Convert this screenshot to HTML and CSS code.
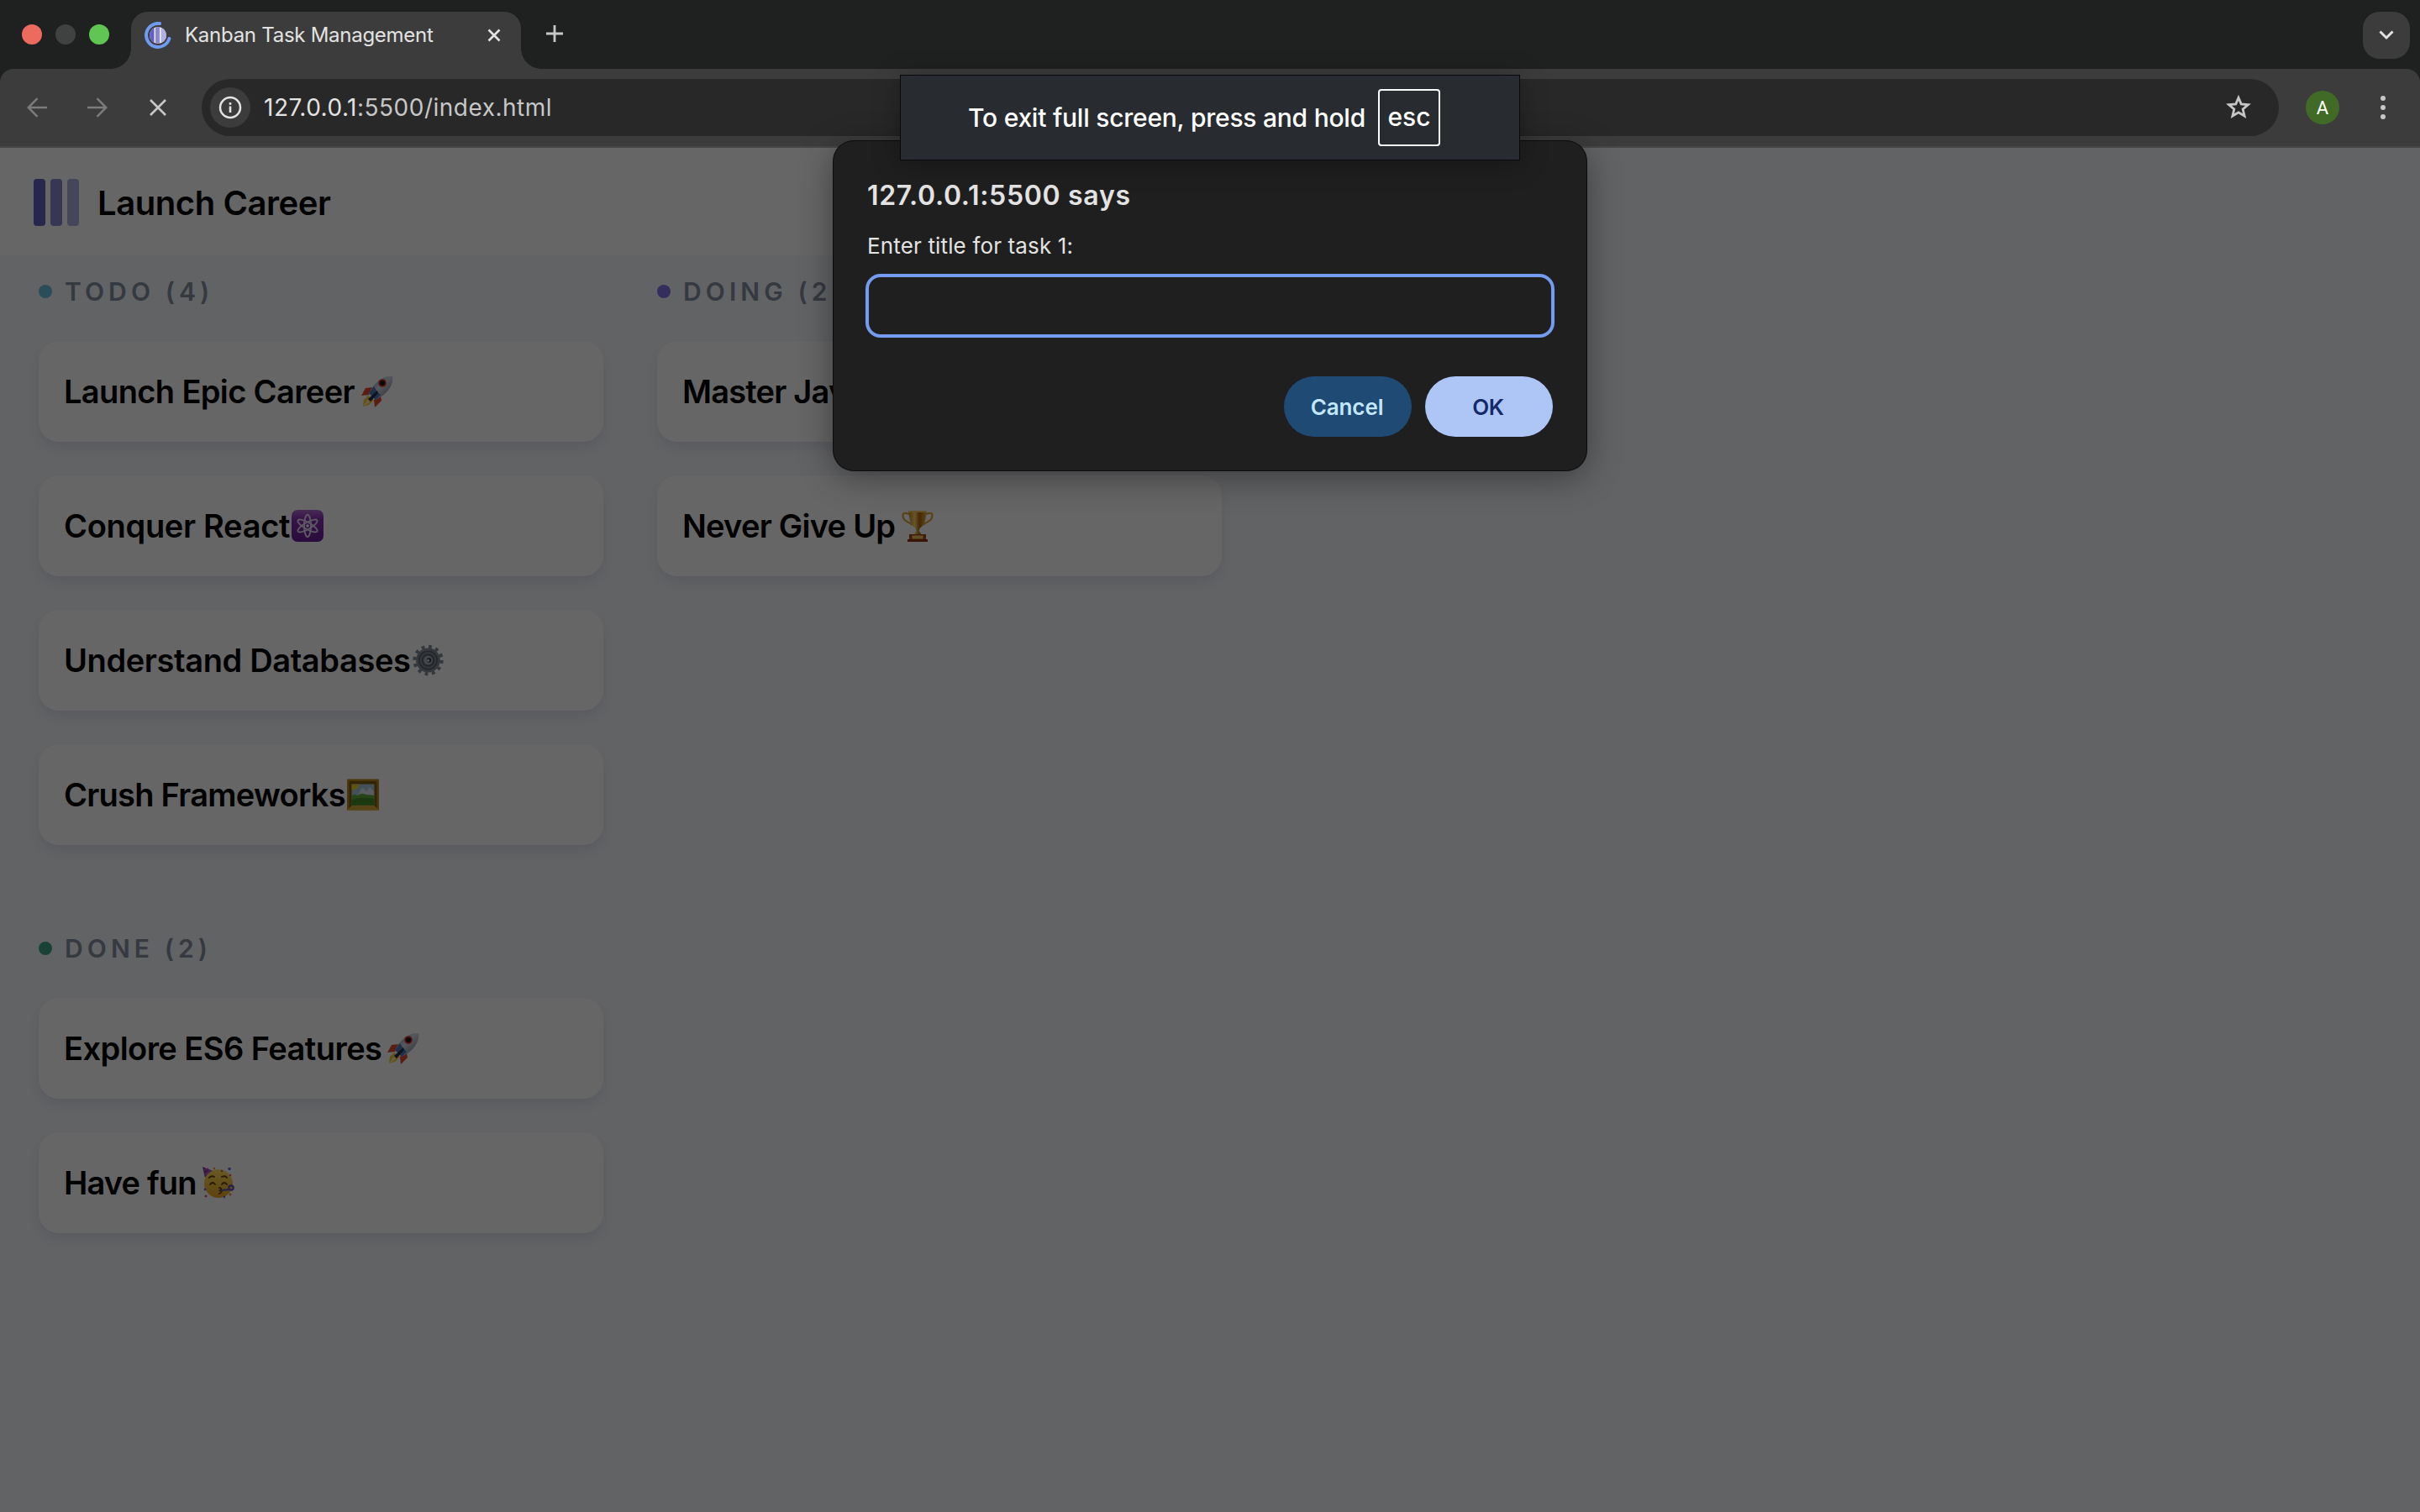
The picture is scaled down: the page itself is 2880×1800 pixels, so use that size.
FILE: index.html
```html
<!DOCTYPE html>
<html lang="en">
<head>
<meta charset="utf-8">
<title>Kanban Task Management</title>
<link rel="stylesheet" href="styles.css">
</head>
<body>
<svg class="defs" width="0" height="0">
  <defs>
    <linearGradient id="rocketBody" x1="0" y1="0" x2="1" y2="1">
      <stop offset="0" stop-color="#4f86d0"/><stop offset=".45" stop-color="#d3dbe8"/><stop offset="1" stop-color="#6b7078"/>
    </linearGradient>
    <linearGradient id="atomBg" x1="0" y1="0" x2="0" y2="1">
      <stop offset="0" stop-color="#b26ad0"/><stop offset=".3" stop-color="#8a2fb4"/><stop offset="1" stop-color="#661e96"/>
    </linearGradient>
    <linearGradient id="gold" x1="0" y1="0" x2="1" y2="0">
      <stop offset="0" stop-color="#c98b22"/><stop offset=".35" stop-color="#ffd96a"/><stop offset=".6" stop-color="#a8690f"/><stop offset="1" stop-color="#e5aa38"/>
    </linearGradient>
    <linearGradient id="face" x1="0" y1="0" x2="0" y2="1">
      <stop offset="0" stop-color="#ffe25e"/><stop offset="1" stop-color="#eda51f"/>
    </linearGradient>
    <symbol id="rocket" viewBox="0 0 38 38">
      <path d="M14 14 5 15 0 24l9-1zM23 24l1 6-8 8-1-9z" fill="#e8482c"/>
      <path d="M8 24 3 29l-1 8 7-2 6-6z" fill="#f6c83c"/>
      <path d="M8 28 2 37l8-5z" fill="#fff09a"/>
      <path d="M37 1C27 0 16 7 9 21l8 8C29 23 39 13 37 1z" fill="url(#rocketBody)"/>
      <path d="M9 21l6-8q3 6 8 10l-6 6z" fill="#4a7cc2"/>
      <path d="M19 18 8 28l3 3 9-10z" fill="#262e44"/>
      <circle cx="25" cy="9" r="4.8" fill="#d8322a"/><circle cx="25" cy="9" r="3" fill="#15171d"/>
    </symbol>
    <symbol id="atom" viewBox="0 0 38 38">
      <rect width="38" height="38" rx="7" fill="url(#atomBg)"/>
      <g fill="none" stroke="#e9dcf4" stroke-width="1.9">
        <ellipse cx="19" cy="19" rx="4" ry="13.2"/>
        <ellipse cx="19" cy="19" rx="4" ry="13.2" transform="rotate(60 19 19)"/>
        <ellipse cx="19" cy="19" rx="4" ry="13.2" transform="rotate(-60 19 19)"/>
      </g>
      <circle cx="19" cy="19" r="1.8" fill="#fff"/>
    </symbol>
    <symbol id="gear" viewBox="0 0 38 38">
      <g fill="none" stroke="#838c98">
        <circle cx="18.500" cy="19" r="16" stroke-width="4.400" stroke-dasharray="3.800 4.577"/>
        <circle cx="18.500" cy="19" r="12.600" stroke-width="3.600"/>
      </g>
      <circle cx="18.500" cy="19" r="11.500" fill="#59616b"/>
      <circle cx="18.500" cy="19" r="8.800" fill="none" stroke="#808893" stroke-width="2.200"/>
      <circle cx="18.500" cy="19" r="5.500" fill="#a9b0bb"/>
      <circle cx="19.500" cy="19" r="2.700" fill="#2f3339"/>
      <circle cx="18.600" cy="19.200" r="1.500" fill="#d9dde2"/>
    </symbol>
    <symbol id="picture" viewBox="0 0 38 38">
      <rect y=".5" width="38" height="37" rx=".8" fill="#b98a1c"/>
      <rect x="2.500" y="3" width="33" height="32" fill="#7d5a12"/>
      <path d="M0 37.500h38l-6-6H6z" fill="#d6aa35"/>
      <rect x="5.500" y="6.500" width="27" height="25" fill="#a9c8dd"/>
      <path d="M5.500 6.500h9c0 4-4 7-9 7z" fill="#f5d02c"/>
      <path d="M14 18q2-6 5-7l4 4 4-5 5 5v6H10z" fill="#dfe9f2"/>
      <path d="M5.500 20q4-2 7 0 5-4 10-1 5 0 10 1v11.500h-27z" fill="#5fae3b"/>
      <path d="M5.500 25q10-4 27-1v7.500h-27z" fill="#478d2b"/>
    </symbol>
    <symbol id="party" viewBox="0 0 38 38">
      <circle cx="19" cy="20" r="17" fill="url(#face)"/>
      <path d="M0 0l12 5q-6 2-9 8z" fill="#6a3bb4"/>
      <path d="M2 4l5-2M3 9l7-5" stroke="#e057a8" stroke-width="1.600"/>
      <g fill="none" stroke="#6d4010" stroke-width="1.900" stroke-linecap="round">
        <path d="M8 13q3-3 6-1M23 12q4-2 6 1M9 21q3-4 6 0M23 21q3-4 6 0M20 25q4 1 1 3 4 1-1 4"/>
      </g>
      <path d="M22 28l10-1" stroke="#5550be" stroke-width="2.200"/>
      <circle cx="34" cy="25" r="2.700" fill="none" stroke="#5550be" stroke-width="2.200"/>
      <g fill="#d84a7c"><circle cx="23" cy="5" r="1.300"/><circle cx="4" cy="35" r="1.500"/><circle cx="33" cy="10" r="1.200"/></g>
      <g fill="#5a68dc"><circle cx="32" cy="2.500" r="1.700"/><circle cx="3" cy="27" r="1.400"/><circle cx="26" cy="36" r="1.200"/></g>
      <g fill="#f0973a"><circle cx="14" cy="2" r="1.300"/><circle cx="33" cy="33" r="1.500"/></g>
    </symbol>
    <symbol id="trophy" viewBox="0 0 38 38">
      <g fill="none" stroke="#dba63a" stroke-width="2.200">
        <path d="M9 5Q1 2 1.500 7t5 7 6 4M29 5q8-3 7.500 2t-5 7-6 4"/>
      </g>
      <path d="M8.500 1h21q0 16-8 21l-1 3 3 4h-9l3-4-1-3q-8-5-8-21z" fill="url(#gold)"/>
      <path d="M8.500 1h21v2h-21z" fill="#f4cf68"/>
      <path d="M9 29h20v6H9z" fill="#a34a1c"/>
      <path d="M12.500 30.500h13v4h-13z" fill="#f1c758"/>
      <path d="M7 35h24v3H7z" fill="#8c3513"/>
    </symbol>
  </defs>
</svg>

<div class="browser">
  <div class="tabstrip">
    <div class="lights"><i class="light close"></i><i class="light minimise"></i><i class="light zoom"></i></div>
    <div class="tab">
      <svg class="favicon" width="32" height="32" viewBox="0 0 32 32">
        <clipPath id="disc"><circle cx="16" cy="16" r="10"/></clipPath>
        <g clip-path="url(#disc)">
          <rect width="32" height="32" fill="#f1f0fb"/>
          <rect x="6" width="5.500" height="32" fill="#635fc7"/><rect x="13" width="5" height="32" fill="#8a87d5"/><rect x="19.500" width="7" height="32" fill="#b1afe3"/>
        </g>
        <path d="M18 2.100A14 14 0 1 0 29.400 20" fill="none" stroke="#6f9bf0" stroke-width="4" stroke-linecap="round"/>
      </svg>
      <span class="tab-title">Kanban Task Management</span>
      <svg class="tab-close" width="16" height="16" viewBox="0 0 16 16"><path d="M1.500 1.500l13 13M14.500 1.500l-13 13" stroke="#e3e3e3" stroke-width="2.600"/></svg>
    </div>
    <svg class="new-tab" width="20" height="20" viewBox="0 0 20 20"><path d="M10 0v20M0 10h20" stroke="#c7c7c7" stroke-width="2.800"/></svg>
    <div class="tab-search"><svg width="18" height="12" viewBox="0 0 18 12"><path d="M1.500 1.500L9 9l7.500-7.500" fill="none" stroke="#e3e3e3" stroke-width="3"/></svg></div>
  </div>

  <div class="toolbar">
    <svg class="back" width="24" height="24" viewBox="0 0 24 24"><path d="M24 12H2M12.500 1.200L1.700 12l10.800 10.800" fill="none" stroke="#7b7b7b" stroke-width="2.500"/></svg>
    <svg class="forward" width="24" height="24" viewBox="0 0 24 24"><path d="M0 12h22M11.500 1.200L22.300 12 11.500 22.800" fill="none" stroke="#7b7b7b" stroke-width="2.500"/></svg>
    <svg class="stop" width="20" height="20" viewBox="0 0 20 20"><path d="M1 1l18 18M19 1L1 19" stroke="#c7c7c7" stroke-width="2.600"/></svg>
    <div class="omnibox">
      <div class="site-info"><svg width="28" height="28" viewBox="0 0 28 28"><circle cx="14" cy="14" r="12" fill="none" stroke="#e3e3e3" stroke-width="2.500"/><path d="M14 12.500v7.500M14 8v2.700" stroke="#e3e3e3" stroke-width="2.600"/></svg></div>
      <span class="url"><b>127.0.0.1</b>:5500/index.html</span>
      <svg class="star" width="32" height="32" viewBox="0 0 32 32"><path d="M16 4.300l3.200 7.600 8.300.7-6.300 5.400 1.900 8L16 21.800 8.900 26l1.900-8-6.300-5.400 8.300-.7z" fill="none" stroke="#c7c7c7" stroke-width="2.800"/></svg>
    </div>
    <div class="avatar">A</div>
    <div class="menu"><i></i><i></i><i></i></div>
  </div>

  <div class="page">
    <header class="header">
      <div class="logo"><i></i><i></i><i></i></div>
      <h1>Launch Career</h1>
    </header>
    <main class="board">
      <section class="column">
        <h2><i class="dot todo"></i>TODO (4)</h2>
        <article class="card"><span class="t-launch">Launch Epic Career</span><svg class="emoji spaced"><use href="#rocket"/></svg></article>
        <article class="card"><span class="t-react">Conquer React</span><svg class="emoji"><use href="#atom"/></svg></article>
        <article class="card"><span class="t-data">Understand Databases</span><svg class="emoji"><use href="#gear"/></svg></article>
        <article class="card"><span class="t-crush">Crush Frameworks</span><svg class="emoji"><use href="#picture"/></svg></article>
      </section>
      <section class="column">
        <h2><i class="dot doing"></i>DOING (2)</h2>
        <article class="card"><span class="t-master">Master JavaScript</span></article>
        <article class="card"><span class="t-never">Never Give Up</span><svg class="emoji spaced"><use href="#trophy"/></svg></article>
      </section>
      <section class="column">
        <h2><i class="dot done"></i>DONE (2)</h2>
        <article class="card"><span class="t-explore">Explore ES6 Features</span><svg class="emoji narrow"><use href="#rocket"/></svg></article>
        <article class="card"><span class="t-fun">Have fun</span><svg class="emoji narrow"><use href="#party"/></svg></article>
      </section>
    </main>
    <div class="scrim"></div>
  </div>

  <div class="dialog" role="dialog">
    <h3>127.0.0.1:5500 says</h3>
    <label for="answer">Enter title for task 1:</label>
    <input id="answer" type="text">
    <div class="actions"><button class="cancel">Cancel</button><button class="ok">OK</button></div>
  </div>

  <div class="notice"><span>To exit full screen, press and hold</span><kbd>esc</kbd></div>
</div>
</body>
</html>
```
FILE: styles.css
```css
* { box-sizing: border-box; }
body { margin: 0; font-family: "Inter", sans-serif; background: #1f2120; }
h1, h2, h3 { margin: 0; }
i { display: block; }
.defs { position: absolute; }
svg { display: block; flex: none; }

.browser {
  position: relative;
  width: 2880px;
  height: 1800px;
  overflow: hidden;
  display: flex;
  flex-direction: column;
}

/* Tab strip */
.tabstrip { height: 82px; display: flex; align-items: flex-start; padding: 14px 12px 0 26px; }
.lights { display: flex; gap: 16px; margin-top: 15px; }
.light { width: 24px; height: 24px; border-radius: 50%; }
.close { background: #ed6a5f; }
.minimise { background: #404141; }
.zoom { background: #61c554; }
.tab {
  position: relative;
  width: 464px;
  height: 68px;
  margin-left: 26px;
  padding: 0 24px 12px 16px;
  border-radius: 20px 20px 0 0;
  background: #3c3c3c;
  display: flex;
  align-items: center;
}
.tab::before, .tab::after { content: ""; position: absolute; bottom: 0; width: 24px; height: 24px; }
.tab::before { left: -24px; background: radial-gradient(circle at 0 0, transparent 23.5px, #3c3c3c 24px); }
.tab::after { right: -24px; background: radial-gradient(circle at 100% 0, transparent 23.5px, #3c3c3c 24px); }
.tab-title { margin-left: 16px; font-size: 24px; line-height: 30px; padding-bottom: 1px; letter-spacing: -.27px; color: #e3e3e3; white-space: nowrap; }
.tab-close { margin-left: auto; }
.new-tab { margin: 16px 0 0 30px; }
.tab-search {
  width: 56px; height: 56px; margin-left: auto; border-radius: 20px; background: #3c3c3c;
  display: flex; align-items: center; justify-content: center;
}

/* Toolbar */
.toolbar {
  height: 94px;
  padding: 0 40px 0 32px;
  border-bottom: 2px solid #474747;
  border-radius: 16px 16px 0 0;
  background: #3c3c3c;
  display: flex;
  align-items: center;
}
.forward { margin-left: 48px; }
.stop { margin-left: 50px; }
.omnibox {
  width: 2472px; height: 68px; margin-left: 42px; padding: 0 32px 0 10px;
  border-radius: 34px; background: #282828; display: flex; align-items: center;
}
.site-info {
  width: 48px; height: 48px; border-radius: 50%; background: #3c3c3c;
  display: flex; align-items: center; justify-content: center;
}
.url { margin-left: 16px; font-size: 28px; letter-spacing: .5px; color: #c7c7c7; }
.url b { font-weight: 400; color: #e3e3e3; }
.star { margin-left: auto; }
.avatar {
  width: 40px; height: 40px; margin-left: 32px; border-radius: 50%; background: #416a27; color: #fff;
  font: 22px/41px "Roboto", sans-serif; text-align: center;
}
.menu { margin-left: auto; margin-right: 1px; display: flex; flex-direction: column; gap: 5px; }
.menu i { width: 6px; height: 6px; border-radius: 50%; background: #c7c7c7; }

/* Page */
.page { position: relative; flex: 1; background: #f5f7fc; color: #000; }
.scrim { position: absolute; inset: 0; background: rgba(0, 0, 0, .6); }
.header { width: 1500px; height: 128px; padding: 2px 0 0 40px; background: #fff; display: flex; align-items: center; gap: 22px; }
.header h1 { font-size: 40px; font-weight: 600; letter-spacing: -.43px; }
.logo { display: flex; gap: 6px; }
.logo i { width: 14px; height: 56px; border-radius: 4px; background: #625fc1; }
.logo i:nth-child(2) { opacity: .75; }
.logo i:nth-child(3) { opacity: .5; }

.board { padding: 24px 46px; display: grid; grid-template-columns: 672px 672px; gap: 104px 64px; }
.column { display: flex; flex-direction: column; gap: 40px; }
.column h2 {
  height: 38px; display: flex; align-items: center; gap: 15px; white-space: pre;
  font-size: 30px; font-weight: 600; letter-spacing: 5.1px; line-height: 38px; color: #868ea1;
}
.dot { width: 16px; height: 16px; border-radius: 50%; }
.todo { background: #67c3e1; }
.doing { background: #8073eb; }
.done { background: #3fa689; }
.card {
  height: 120px; padding-left: 30px; border-radius: 24px; background: #fff;
  box-shadow: 0 8px 12px rgba(54, 78, 126, .1);
  display: flex; align-items: center; gap: 2px;
  font-size: 38px; font-weight: 600; white-space: nowrap;
}
.emoji { width: 38px; height: 38px; }
.narrow { margin-left: 5px; }
.spaced { margin-left: 6px; }
.t-launch { letter-spacing: -.63px; }
.t-react { letter-spacing: -.3px; }
.t-data { letter-spacing: -.38px; }
.t-crush { letter-spacing: -.75px; }
.t-master { letter-spacing: -.8px; }
.t-never { letter-spacing: -.75px; }
.t-explore { letter-spacing: -.55px; }
.t-fun { letter-spacing: -.85px; }

/* Prompt dialog floating over the page */
.dialog {
  position: absolute; left: 992px; top: 168px; width: 896px; height: 392px;
  padding: 46px 40px 40px; border-radius: 24px; background: #1f1f1f; color: #e3e3e3;
  box-shadow: 0 0 0 1px #0c0c0c, 0 8px 40px rgba(0, 0, 0, .4);
  display: flex; flex-direction: column;
}
.dialog h3 { font-size: 32px; line-height: 38px; font-weight: 600; letter-spacing: .7px; }
.dialog label { margin: 22px 0 14px; font-size: 26px; line-height: 38px; letter-spacing: .15px; }
.dialog input {
  height: 76px; margin: 0 -2px; border: 4px solid #739bef; border-radius: 18px; background: #1f1f1f; outline: none;
}
.actions { margin-top: 46px; display: flex; justify-content: flex-end; gap: 16px; }
.actions button { width: 152px; height: 72px; padding: 0 2px 0 0; border: 0; border-radius: 36px; font: 600 26px "Inter", sans-serif; }
.cancel { background: #1f4a73; color: #c2e7ff; letter-spacing: -.1px; }
.ok { background: #aec6f6; color: #14296a; letter-spacing: -.5px; }

/* Full screen notice */
.notice {
  position: absolute; left: 1072px; top: 90px; width: 736px; height: 100px;
  padding-left: 80px; background: #282b30; color: #fff;
  box-shadow: 0 0 0 1px #08090a, 0 4px 30px rgba(0, 0, 0, .35);
  display: flex; align-items: center; font-size: 30px; font-weight: 500;
}
.notice span { width: 488px; letter-spacing: -.24px; white-space: nowrap; }
.notice kbd {
  width: 74px; height: 68px; border: 2px solid #fff; border-radius: 4px;
  font: 500 30px/63px "Inter", sans-serif; text-align: center;
}
```
